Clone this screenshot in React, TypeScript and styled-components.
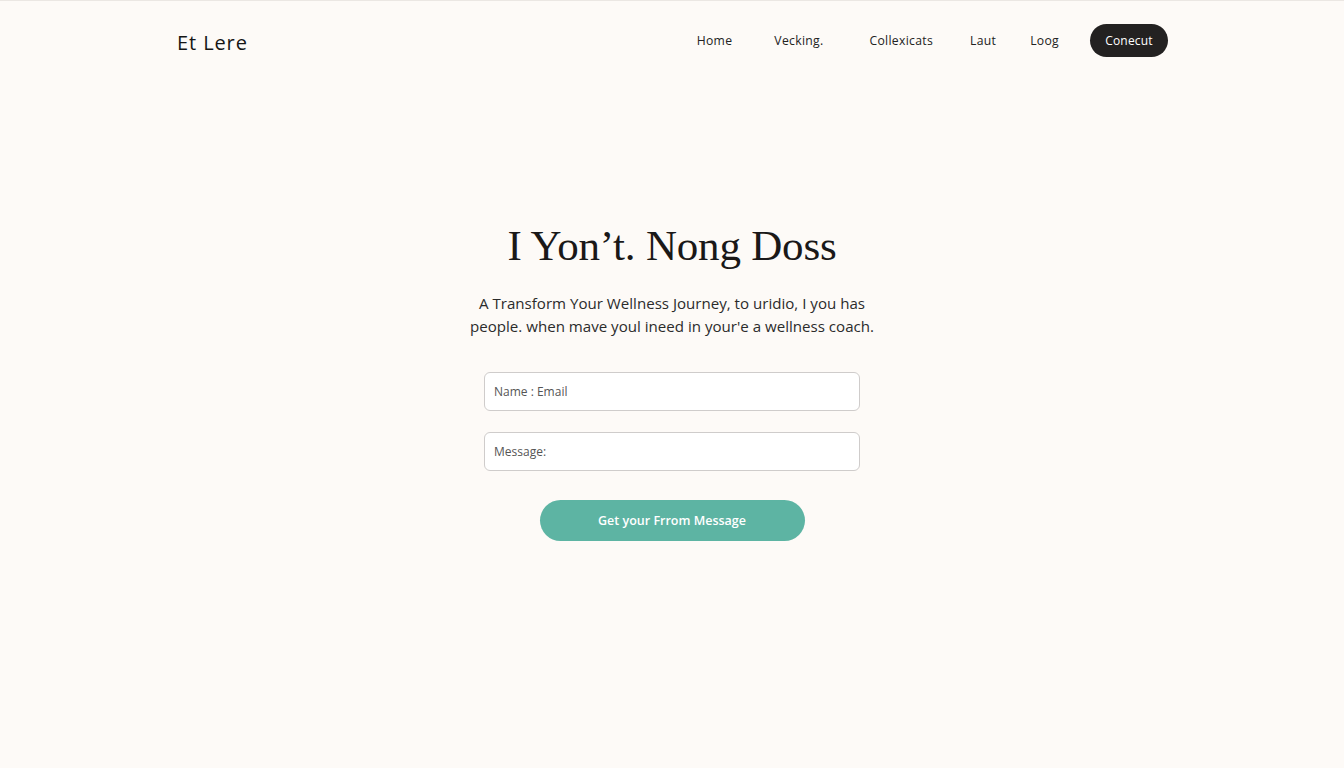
import React from "react";
import styled, { createGlobalStyle } from "styled-components";

const GlobalStyle = createGlobalStyle`
  html, body {
    margin: 0;
    padding: 0;
    background: #fdfaf7;
    font-family: "Open Sans", "Liberation Sans", Arial, sans-serif;
    color: #1d1d1d;
    -webkit-font-smoothing: antialiased;
  }
`;

const Page = styled.div`
  min-height: 768px;
  border-top: 1px solid #ebe7e3;
  box-sizing: border-box;
  display: flex;
  flex-direction: column;
`;

const Header = styled.header`
  height: 80px;
  padding: 0 176px 0 177px;
  display: flex;
  align-items: center;
  justify-content: space-between;
`;

const Logo = styled.div`
  font-family: "Open Sans", "Liberation Sans", sans-serif;
  font-size: 20px;
  letter-spacing: 0.9px;
  color: #151515;
  margin-top: 2px;
`;

const Nav = styled.nav`
  display: flex;
  align-items: center;
  margin-top: -2px;
`;

const NavLink = styled.a<{ $gap: number }>`
  font-size: 12.2px;
  letter-spacing: 0.3px;
  color: #222;
  margin-right: ${(p) => p.$gap}px;
  text-decoration: none;
`;

const ContactButton = styled.button`
  height: 33px;
  width: 78px;
  border: none;
  border-radius: 17px;
  background: #232121;
  color: #fff;
  font-family: inherit;
  font-size: 12px;
  letter-spacing: 0.2px;
  padding: 0;
`;

const Hero = styled.main`
  display: flex;
  flex-direction: column;
  align-items: center;
  padding-top: 139px;
`;

const Title = styled.h1`
  margin: 0;
  font-family: "Liberation Serif", "Times New Roman", serif;
  font-weight: 400;
  font-size: 43px;
  line-height: 52px;
  color: #1a1818;
  letter-spacing: -0.2px;
`;

const Lead = styled.p`
  margin: 20px 0 0;
  text-align: center;
  font-size: 15.1px;
  line-height: 23px;
  color: #2b2b2b;
`;

const Form = styled.form`
  margin-top: 34px;
  display: flex;
  flex-direction: column;
  align-items: center;
  gap: 21px;
`;

const Field = styled.input`
  width: 376px;
  height: 39px;
  box-sizing: border-box;
  border: 1px solid #cfcccb;
  border-radius: 6px;
  background: #fff;
  padding: 0 9px;
  font-family: inherit;
  font-size: 12px;
  &::placeholder {
    color: #555;
  }
`;

const Submit = styled.button`
  margin-top: 8px;
  width: 265px;
  height: 41px;
  border: none;
  border-radius: 21px;
  background: #5db4a3;
  color: #fff;
  font-family: inherit;
  font-weight: 600;
  font-size: 12.5px;
`;

export default function App() {
  return (
    <>
      <GlobalStyle />
      <Page>
        <Header>
          <Logo>Et Lere</Logo>
          <Nav>
            <NavLink $gap={42}>Home</NavLink>
            <NavLink $gap={46}>Vecking.</NavLink>
            <NavLink $gap={37}>Collexicats</NavLink>
            <NavLink $gap={34}>Laut</NavLink>
            <NavLink $gap={31}>Loog</NavLink>
            <ContactButton>Conecut</ContactButton>
          </Nav>
        </Header>
        <Hero>
          <Title>I Yon’t. Nong Doss</Title>
          <Lead>
            A Transform Your Wellness Journey, to uridio, I you has
            <br />
            people. when mave youl ineed in your'e a wellness coach.
          </Lead>
          <Form onSubmit={(e) => e.preventDefault()}>
            <Field placeholder="Name : Email" />
            <Field placeholder="Message:" />
            <Submit type="submit">Get your Frrom Message</Submit>
          </Form>
        </Hero>
      </Page>
    </>
  );
}
